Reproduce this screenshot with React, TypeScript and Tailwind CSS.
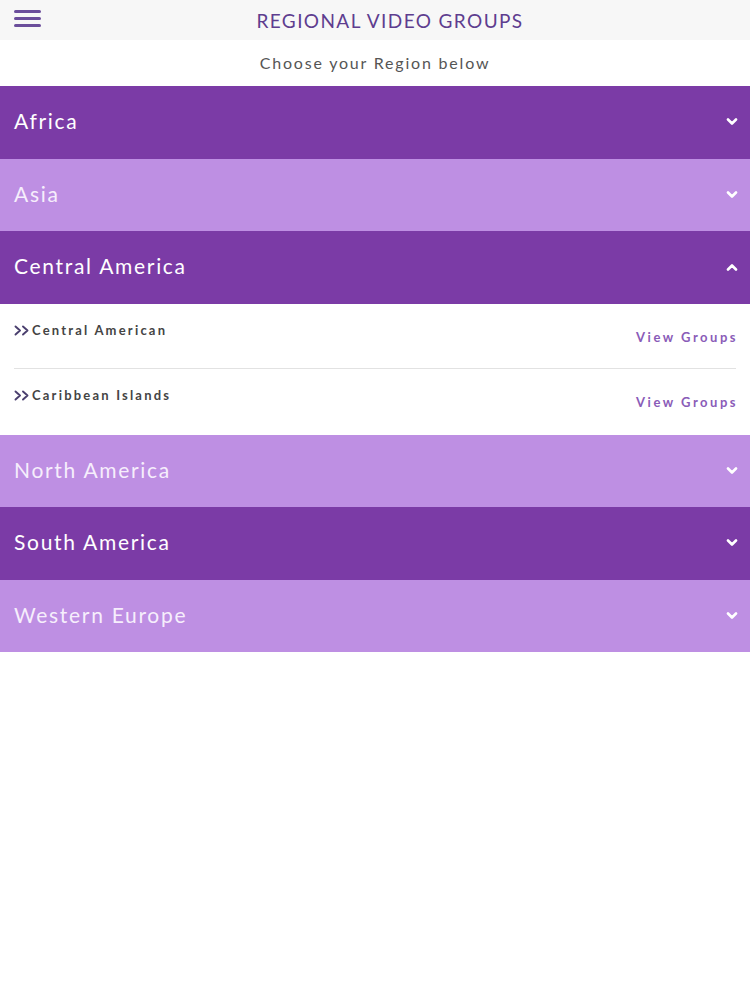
import React, { useState } from 'react';

const REGIONS = [
  { name: 'Africa', items: [] as string[] },
  { name: 'Asia', items: [] as string[] },
  { name: 'Central America', items: ['Central American', 'Caribbean Islands'] },
  { name: 'North America', items: [] as string[] },
  { name: 'South America', items: [] as string[] },
  { name: 'Western Europe', items: [] as string[] },
];

const Chevron = ({ up }: { up: boolean }) => (
  <svg width="12" height="8" viewBox="0 0 12 8" className="text-white">
    <path
      d={up ? 'M2 6.5 L6 2.5 L10 6.5' : 'M2 1.5 L6 5.5 L10 1.5'}
      fill="none"
      stroke="currentColor"
      strokeWidth="2.6"
      strokeLinecap="round"
      strokeLinejoin="round"
    />
  </svg>
);

const DoubleChevron = () => (
  <svg width="17" height="11" viewBox="0 0 17 11" className="text-[#4a3f6e] mr-[1px]">
    <path
      d="M1.5 1.5 L6 5.5 L1.5 9.5 M9 1.5 L13.5 5.5 L9 9.5"
      fill="none"
      stroke="currentColor"
      strokeWidth="1.9"
      strokeLinecap="round"
      strokeLinejoin="round"
    />
  </svg>
);

export default function App() {
  const [open, setOpen] = useState<string | null>('Central America');

  return (
    <div className="min-h-screen bg-white" style={{ fontFamily: 'Lato, "Open Sans", sans-serif' }}>
      {/* Header */}
      <div className="relative h-[40px] bg-[#f7f7f7] flex items-center justify-center pl-[30px]">
        <button className="absolute left-[14px] top-[10px] flex flex-col gap-[4.5px]">
          <span className="block w-[27px] h-[2.5px] bg-[#6b4e9b] rounded" />
          <span className="block w-[27px] h-[2.5px] bg-[#6b4e9b] rounded" />
          <span className="block w-[27px] h-[2.5px] bg-[#6b4e9b] rounded" />
        </button>
        <h1 className="text-[19px] text-[#5e3d8f] tracking-[1.4px] leading-none">REGIONAL VIDEO GROUPS</h1>
      </div>

      {/* Subtitle */}
      <div className="h-[46px] flex items-center justify-center">
        <p className="text-[16px] text-[#555555] tracking-[1.8px]">Choose your Region below</p>
      </div>

      {/* Accordion */}
      <div>
        {REGIONS.map((r, i) => {
          const isOpen = open === r.name;
          const dark = i % 2 === 0;
          return (
            <div key={r.name}>
              <button
                onClick={() => setOpen(isOpen ? null : r.name)}
                className={`w-full h-[72.5px] flex items-center justify-between pl-[14px] pr-[12px] ${
                  dark ? 'bg-[#7b3ba6] text-white' : 'bg-[#be8fe3] text-[#f6eefc]'
                }`}
              >
                <span className="text-[21px] tracking-[1.7px] -mt-[3px]">{r.name}</span>
                <Chevron up={isOpen} />
              </button>
              {isOpen && r.items.length > 0 && (
                <div className="px-[14px]">
                  {r.items.map((it, j) => (
                    <div
                      key={it}
                      className={`h-[65.5px] flex justify-between ${
                        j < r.items.length - 1 ? 'border-b border-[#e2e2e2]' : ''
                      }`}
                    >
                      <div className="pt-[20px] flex items-center self-start text-[13px] font-bold tracking-[2.2px] text-[#444444] leading-none">
                        <DoubleChevron />
                        <span>{it}</span>
                      </div>
                      <div className="pt-[24px] text-[13px] font-bold tracking-[2.5px] text-[#8a5cb8] -mr-[2px]">View Groups</div>
                    </div>
                  ))}
                </div>
              )}
            </div>
          );
        })}
      </div>
    </div>
  );
}
